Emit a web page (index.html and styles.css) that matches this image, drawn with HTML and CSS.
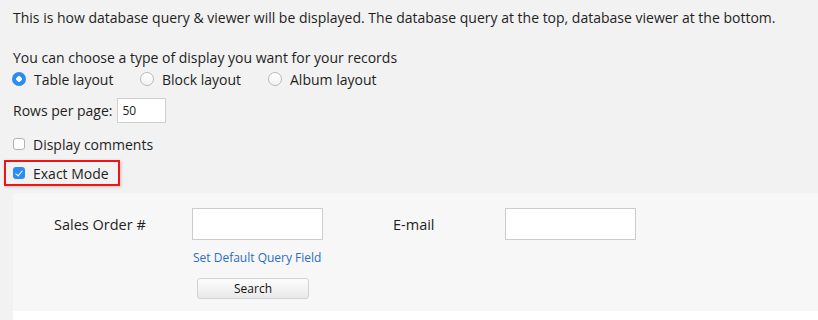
FILE: index.html
```html
<!DOCTYPE html>
<html>
<head>
<meta charset="utf-8">
<link rel="stylesheet" href="styles.css">
</head>
<body>
<div class="settings">
  <p class="intro">This is how database query &amp; viewer will be displayed. The database query at the top, database viewer at the bottom.</p>
  <p class="choose">You can choose a type of display you want for your records</p>
  <div class="layouts">
    <label class="opt"><input type="radio" name="lay" checked><span>Table layout</span></label>
    <label class="opt"><input type="radio" name="lay"><span>Block layout</span></label>
    <label class="opt"><input type="radio" name="lay"><span>Album layout</span></label>
  </div>
  <div class="rows">Rows per page: <input class="rows-input" type="text" value="50"></div>
  <label class="check"><input type="checkbox"><span>Display comments</span></label>
  <div class="exact-wrap">
    <label class="check exact"><input type="checkbox" checked><span>Exact Mode</span></label>
  </div>
</div>
<div class="panel">
  <div class="fields">
    <div class="lbl">Sales Order #</div>
    <input class="field" type="text">
    <div class="lbl lbl2">E-mail</div>
    <input class="field" type="text">
  </div>
  <div class="actions">
    <a class="link" href="#">Set Default Query Field</a>
    <button class="search">Search</button>
  </div>
</div>
<div class="viewer"></div>
</body>
</html>
```
FILE: styles.css
```css
html, body {
  margin: 0;
  padding: 0;
  background: #f2f2f2;
  font-family: "Open Sans", "Noto Sans", sans-serif;
  font-size: 14px;
  color: #1e1e1e;
}
.settings {
  padding: 8px 0 0 13px;
}
.intro {
  margin: 0;
  line-height: 20px;
}
.choose {
  margin: 20px 0 0 0;
  line-height: 20px;
}
.layouts {
  display: flex;
  height: 22px;
  align-items: center;
  margin-left: -1px;
}
.opt {
  display: flex;
  align-items: center;
  width: 128px;
}
.opt input {
  appearance: none;
  -webkit-appearance: none;
  margin: 0 8px 0 0;
  width: 14px;
  height: 14px;
  border-radius: 50%;
  border: 1px solid #b9b9b9;
  background: linear-gradient(#ffffff, #f3f3f3);
  box-sizing: border-box;
  flex: none;
}
.opt input:checked {
  border: none;
  background: radial-gradient(circle, #ffffff 0 2.5px, #2b8cf2 3px);
}
.rows {
  display: flex;
  align-items: center;
  margin-top: 8px;
  height: 25px;
}
.rows-input {
  margin-left: 4px;
  width: 49px;
  height: 25px;
  box-sizing: border-box;
  border: 1px solid #d0d0d0;
  background: #fff;
  font-family: inherit;
  font-size: 12px;
  padding: 0 5px;
  color: #222;
}
.check {
  display: flex;
  align-items: center;
  height: 20px;
}
.settings > .check {
  margin-top: 11px;
}
.check input {
  appearance: none;
  -webkit-appearance: none;
  margin: 0 8px 0 0;
  width: 12px;
  height: 12px;
  border-radius: 3px;
  border: 1px solid #b3b3b3;
  background: #fff;
  box-sizing: border-box;
  flex: none;
  position: relative;
}
.check input:checked {
  border: none;
  background: #2b8cf2;
}
.check input:checked::after {
  content: "";
  position: absolute;
  left: 4px;
  top: 1.5px;
  width: 3px;
  height: 6px;
  border: solid #fff;
  border-width: 0 1.6px 1.6px 0;
  transform: rotate(40deg);
}
.exact-wrap {
  margin: 6px 0 0 -9px;
  width: 116px;
  height: 26px;
  box-sizing: border-box;
  border: 2px solid #f01414;
  box-shadow: 1px 1px 3px rgba(0,0,0,0.18);
  display: flex;
  align-items: center;
  padding-left: 7px;
}
.panel {
  margin: 7px 0 0 13px;
  background: #f7f7f7;
  height: 118px;
  box-sizing: border-box;
  padding-top: 15px;
}
.fields {
  display: grid;
  grid-template-columns: 138px 131px 70px 112px 131px;
  align-items: center;
  padding-left: 41px;
}
.lbl {
  font-size: 14.5px;
  line-height: 20px;
  padding-top: 2px;
}
.lbl2 {
  grid-column: 4;
}
.field {
  width: 131px;
  height: 32px;
  box-sizing: border-box;
  border: 1px solid #cccccc;
  background: #fff;
  margin: 0;
}
.actions {
  display: flex;
  flex-direction: column;
  align-items: flex-start;
  padding-left: 180px;
  margin-top: 10px;
}
.link {
  color: #2a6ebf;
  text-decoration: none;
  font-size: 12px;
  line-height: 16px;
}
.search {
  margin: 12px 0 0 4px;
  width: 112px;
  height: 21px;
  border: 1px solid #d2d2d2;
  border-radius: 3px;
  background: linear-gradient(#fdfdfd, #e9e9e9);
  font-family: inherit;
  font-size: 12px;
  color: #111;
  padding: 0;
  line-height: 19px;
}
.viewer {
  margin-left: 13px;
  background: #fff;
  height: 20px;
}
```
